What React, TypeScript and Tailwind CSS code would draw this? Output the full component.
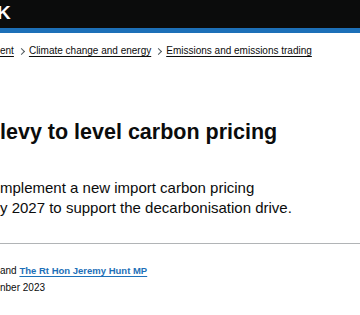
import React from "react";

const Chevron = () => (
  <span className="mx-[5px] inline-block h-[5px] w-[5px] rotate-45 border-r border-t border-[#505a5f]" />
);

const App = () => {
  return (
    <div className="h-[315px] w-[360px] overflow-hidden bg-white font-['Liberation_Sans',Arial,sans-serif] text-[#0b0c0c]">
      {/* Header */}
      <header className="h-[33px] border-b-[5px] border-[#1d70b8] bg-[#0b0c0c]">
        <div className="-ml-[3px] text-[19px] font-bold leading-[25px] text-white">K</div>
      </header>

      {/* Breadcrumbs */}
      <nav className="mt-[12px] flex items-center whitespace-nowrap text-[10px] leading-[12px]">
        <a className="underline decoration-[#0b0c0c] underline-offset-[2px]">ent</a>
        <Chevron />
        <a className="underline decoration-[#0b0c0c] underline-offset-[2px]">Climate change and energy</a>
        <Chevron />
        <a className="underline decoration-[#0b0c0c] underline-offset-[2px]">Emissions and emissions trading</a>
      </nav>

      {/* Title */}
      <h1 className="mt-[62px] whitespace-nowrap text-[21.5px] font-bold leading-[26px]">
        levy to level carbon pricing
      </h1>

      <p className="mt-[33px] whitespace-nowrap text-[15px] leading-[20px]">
        mplement a new import carbon pricing
        <br />
        y 2027 to support the decarbonisation drive.
      </p>

      <hr className="mt-[25px] border-t border-[#b1b4b6]" />

      {/* Metadata */}
      <div className="mt-[18px] whitespace-nowrap text-[10px] leading-[17px]">
        <div>
          and{" "}
          <a className="text-[9.5px] font-bold text-[#1d70b8] underline decoration-[#1d70b8] underline-offset-[2px]">
            The Rt Hon Jeremy Hunt MP
          </a>
        </div>
        <div>nber 2023</div>
      </div>
    </div>
  );
};

export default App;
